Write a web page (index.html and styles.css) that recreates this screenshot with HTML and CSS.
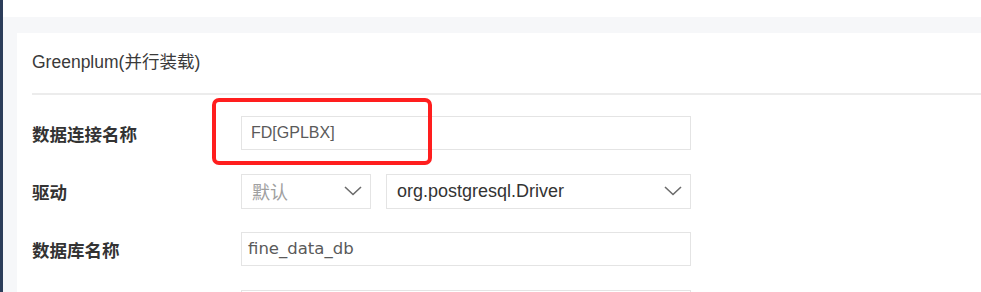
FILE: index.html
```html
<!DOCTYPE html>
<html>
  <head>
    <meta charset="UTF-8">
    <title>数据连接</title>
    <link rel="stylesheet" href="styles.css">
  </head>
  <body>
    <div class="frame">
      <div class="panel">
        <div class="card">
          <div class="card-title">Greenplum(并行装载)</div>
          <div class="form">
            <div class="row">
              <label class="label">数据连接名称</label>
              <div class="field highlight">
                <div class="input">FD[GPLBX]</div>
                <div class="mark"></div>
              </div>
            </div>
            <div class="row">
              <label class="label">驱动</label>
              <div class="field split">
                <div class="select small">
                  <span class="muted">默认</span>
                  <svg class="chev" width="18" height="10" viewBox="0 0 18 10"><polyline points="1,1 9,8.5 17,1" fill="none" stroke="#6b6b6b" stroke-width="1.6"/></svg>
                </div>
                <div class="select wide">
                  <span class="dark">org.postgresql.Driver</span>
                  <svg class="chev" width="18" height="10" viewBox="0 0 18 10"><polyline points="1,1 9,8.5 17,1" fill="none" stroke="#6b6b6b" stroke-width="1.6"/></svg>
                </div>
              </div>
            </div>
            <div class="row">
              <label class="label">数据库名称</label>
              <div class="field">
                <div class="input wide-text">fine_data_db</div>
              </div>
            </div>
            <div class="row">
              <label class="label"></label>
              <div class="field">
                <div class="input"></div>
              </div>
            </div>
          </div>
        </div>
      </div>
    </div>
  </body>
</html>
```

FILE: styles.css
```css
body {
  margin: 0;
  background: #ffffff;
  font-family: "Liberation Sans", "Noto Sans CJK SC", sans-serif;
  overflow: hidden;
}
.frame {
  border-left: 3px solid #2c3d5a;
  padding-top: 17px;
  height: 275px;
}
.panel {
  background: #f6f7f9;
  padding: 16px 0 0 14px;
  height: 259px;
}
.card {
  background: #ffffff;
  padding-left: 15px;
  height: 259px;
}
.card-title {
  height: 60px;
  line-height: 58px;
  font-size: 17.5px;
  color: #3a3a3a;
  border-bottom: 2px solid #ececec;
}
.form {
  padding-top: 21px;
}
.row {
  display: flex;
  align-items: center;
  height: 34px;
  margin-bottom: 24px;
}
.label {
  width: 209px;
  font-size: 17.5px;
  font-weight: bold;
  color: #333333;
}
.field {
  position: relative;
  width: 450px;
  height: 34px;
}
.split {
  display: flex;
  gap: 15px;
  height: 35px;
}
.input {
  box-sizing: border-box;
  height: 100%;
  border: 1px solid #e4e4e4;
  padding-left: 9px;
  line-height: 32px;
  font-size: 16px;
  color: #5a5a5a;
}
.wide-text {
  padding-left: 6px;
  font-family: "DejaVu Sans", "Noto Sans CJK SC", sans-serif;
  font-size: 16.5px;
}
.select {
  box-sizing: border-box;
  display: flex;
  align-items: center;
  justify-content: space-between;
  height: 100%;
  border: 1px solid #e4e4e4;
  padding: 0 8px 0 10px;
}
.small {
  width: 130px;
}
.wide {
  flex: 1;
}
.muted {
  color: #a0a0a0;
  font-size: 18px;
}
.dark {
  color: #333333;
  font-size: 18px;
}
.mark {
  position: absolute;
  left: -29px;
  top: -18px;
  width: 212px;
  height: 59px;
  border: 4px solid #ff1e1e;
  border-radius: 7px;
}
```
